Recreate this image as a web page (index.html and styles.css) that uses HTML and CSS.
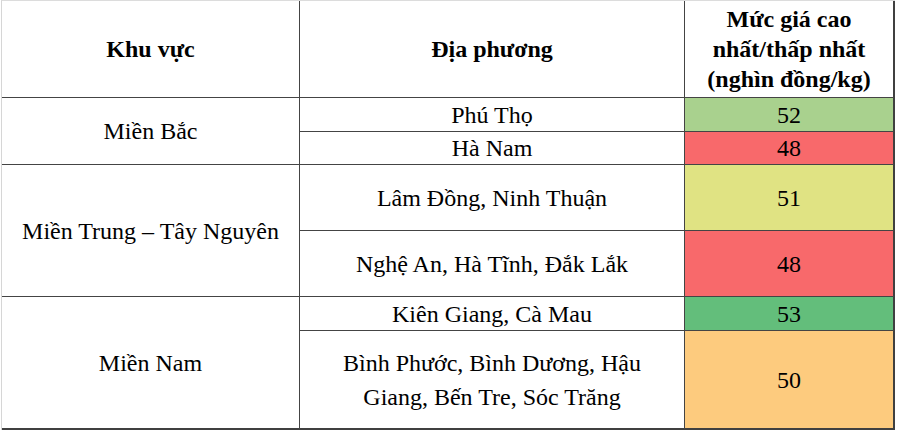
FILE: index.html
```html
<!DOCTYPE html>
<html lang="vi">
<head>
<meta charset="utf-8">
<link rel="stylesheet" href="styles.css">
</head>
<body>
<div class="pg-grid">
  <div class="pg-box pg-bold pg-c1 pg-r1"><p class="pg-t">Khu vực</p></div>
  <div class="pg-box pg-bold pg-c2 pg-r1"><p class="pg-t">Địa phương</p></div>
  <div class="pg-box pg-bold pg-c3 pg-r1 pg-end-col"><p class="pg-t">Mức giá cao<br>nhất/thấp nhất<br>(nghìn đồng/kg)</p></div>

  <div class="pg-box pg-c1 pg-span-bac"><p class="pg-t">Miền Bắc</p></div>
  <div class="pg-box pg-c2 pg-r2"><p class="pg-t">Phú Thọ</p></div>
  <div class="pg-box pg-c3 pg-r2 pg-end-col pg-green-light"><p class="pg-t">52</p></div>
  <div class="pg-box pg-c2 pg-r3"><p class="pg-t">Hà Nam</p></div>
  <div class="pg-box pg-c3 pg-r3 pg-end-col pg-red"><p class="pg-t">48</p></div>

  <div class="pg-box pg-c1 pg-span-trung pg-nowrap"><p class="pg-t">Miền Trung – Tây Nguyên</p></div>
  <div class="pg-box pg-c2 pg-r4"><p class="pg-t">Lâm Đồng, Ninh Thuận</p></div>
  <div class="pg-box pg-c3 pg-r4 pg-end-col pg-yellow"><p class="pg-t">51</p></div>
  <div class="pg-box pg-c2 pg-r5"><p class="pg-t">Nghệ An, Hà Tĩnh, Đắk Lắk</p></div>
  <div class="pg-box pg-c3 pg-r5 pg-end-col pg-red"><p class="pg-t">48</p></div>

  <div class="pg-box pg-c1 pg-span-nam pg-end-row"><p class="pg-t">Miền Nam</p></div>
  <div class="pg-box pg-c2 pg-r6"><p class="pg-t">Kiên Giang, Cà Mau</p></div>
  <div class="pg-box pg-c3 pg-r6 pg-end-col pg-green"><p class="pg-t">53</p></div>
  <div class="pg-box pg-c2 pg-r7 pg-end-row pg-two"><p class="pg-t">Bình Phước, Bình Dương, Hậu<br>Giang, Bến Tre, Sóc Trăng</p></div>
  <div class="pg-box pg-c3 pg-r7 pg-end-col pg-end-row pg-orange"><p class="pg-t">50</p></div>
</div>
</body>
</html>
```
FILE: styles.css
```css
body {
  margin: 0;
  font-size: 24px;
}

.pg-grid {
  margin-left: 1px;
  display: grid;
  grid-template-columns: 298px 385px 210px;
  grid-template-rows: 97px 34px 33px 66px 66px 34px 99px;
  border-left: 1px solid #d6d6d6;
  border-top: 1px solid #dcdcdc;
  width: max-content;
}

.pg-box {
  box-sizing: border-box;
  border-right: 1px solid #444444;
  border-bottom: 1px solid #444444;
  display: flex;
  align-items: center;
  justify-content: center;
  text-align: center;
}

.pg-t {
  margin: 0;
  font-family: "Liberation Serif";
  font-size: 24px;
  line-height: 30px;
}

.pg-bold .pg-t {
  font-weight: bold;
}

.pg-c1 { grid-column: 1; }
.pg-c2 { grid-column: 2; }
.pg-c3 { grid-column: 3; }

.pg-r1 { grid-row: 1; }
.pg-r2 { grid-row: 2; }
.pg-r3 { grid-row: 3; }
.pg-r4 { grid-row: 4; }
.pg-r5 { grid-row: 5; }
.pg-r6 { grid-row: 6; }
.pg-r7 { grid-row: 7; }

.pg-span-bac { grid-row: 2 / span 2; }
.pg-span-trung { grid-row: 4 / span 2; }
.pg-span-nam { grid-row: 6 / span 2; }

.pg-grid .pg-end-col { border-right: 2px solid #404040; }
.pg-grid .pg-end-row { border-bottom: 2px solid #404040; }

.pg-nowrap { white-space: nowrap; }
.pg-two .pg-t { line-height: 34px; }

.pg-green-light { background: #a9d18e; }
.pg-red { background: #f8696b; }
.pg-yellow { background: #e0e383; }
.pg-green { background: #63be7b; }
.pg-orange { background: #fdcb7e; }
```
